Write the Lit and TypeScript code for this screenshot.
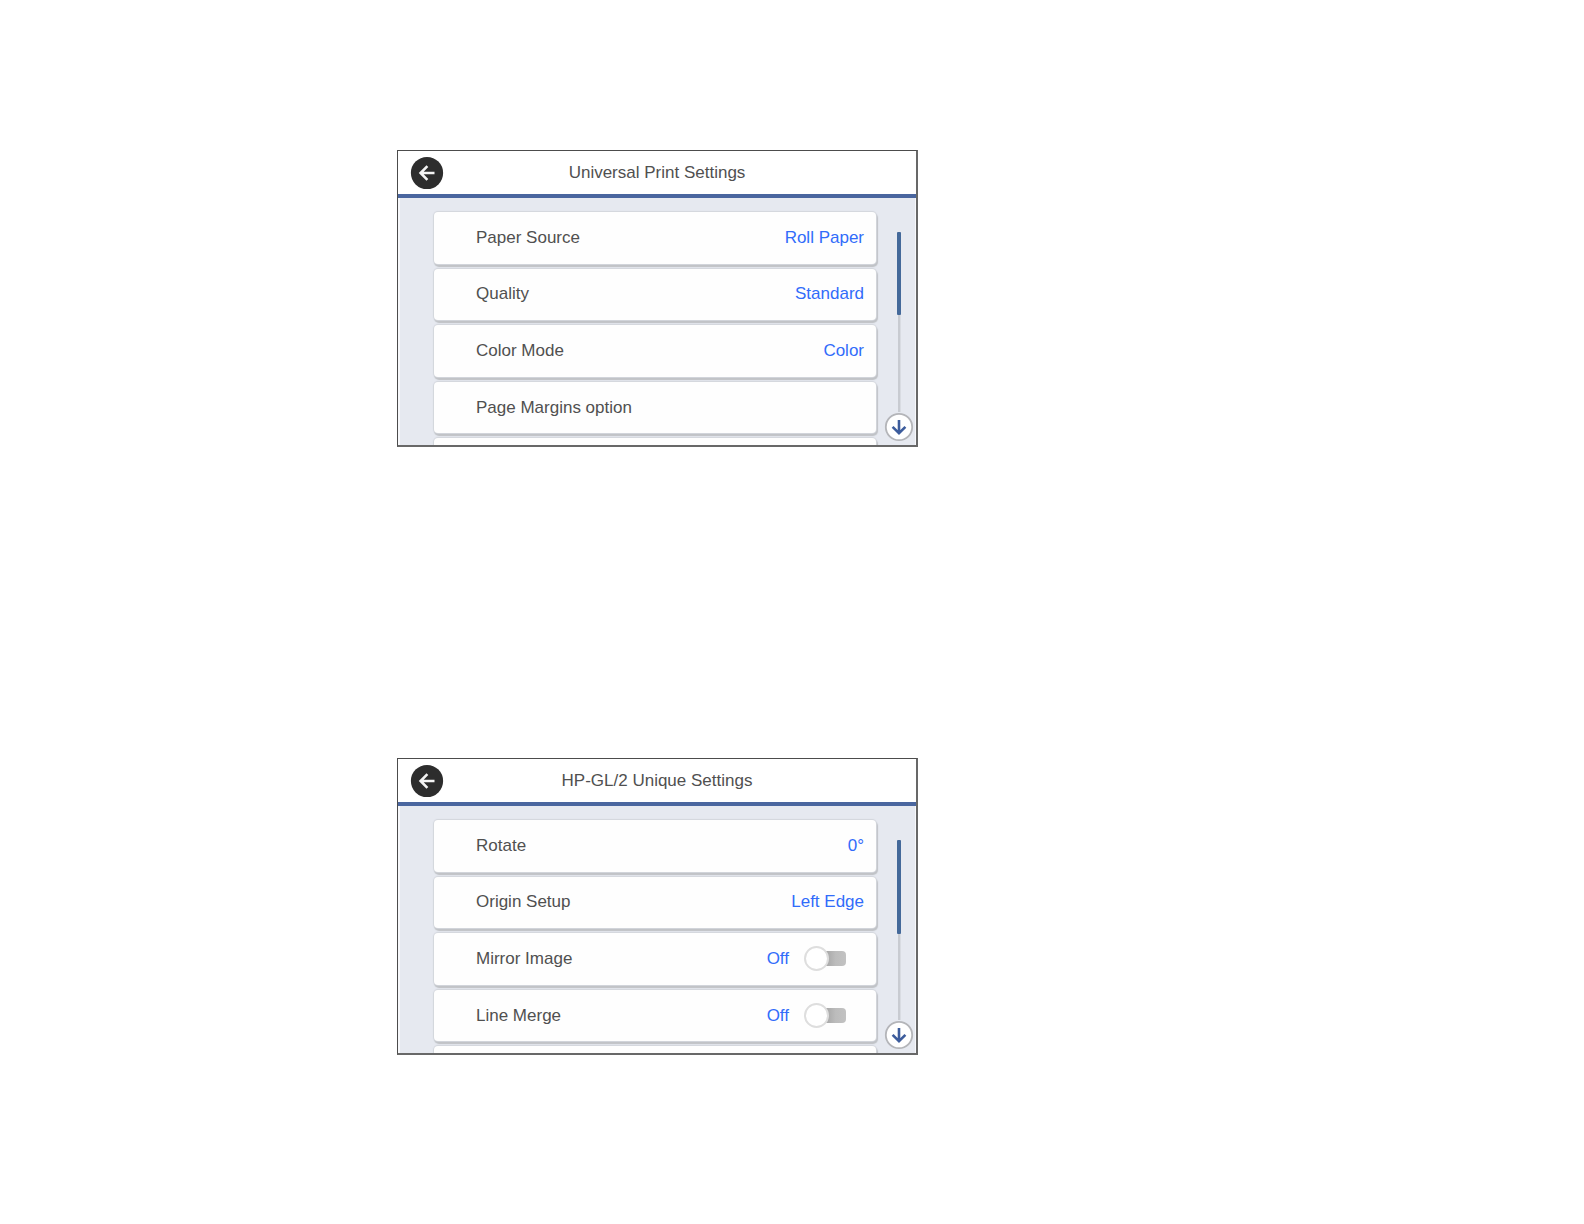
import { LitElement, html, css, nothing } from "lit";
import { customElement, property } from "lit/decorators.js";

interface Setting {
  label: string;
  value: string;
  toggle?: boolean;
}

interface Panel {
  title: string;
  thumb: number;
  settings: Setting[];
}

const PANELS: Panel[] = [
  {
    title: "Universal Print Settings",
    thumb: 46,
    settings: [
      { label: "Paper Source", value: "Roll Paper" },
      { label: "Quality", value: "Standard" },
      { label: "Color Mode", value: "Color" },
      { label: "Page Margins option", value: "" },
    ],
  },
  {
    title: "HP-GL/2 Unique Settings",
    thumb: 52,
    settings: [
      { label: "Rotate", value: "0°" },
      { label: "Origin Setup", value: "Left Edge" },
      { label: "Mirror Image", value: "Off", toggle: true },
      { label: "Line Merge", value: "Off", toggle: true },
    ],
  },
];

@customElement("settings-panel")
export class SettingsPanel extends LitElement {
  @property({ attribute: false }) panel!: Panel;

  static styles = css`
    :host {
      display: block;
      box-sizing: border-box;
      border: 1px solid #4c4c4c;
      border-right: 2px solid #686868;
      border-bottom: 2px solid #686868;
      background: #ffffff;
      color: #505050;
      font-family: "Liberation Sans", Arial, sans-serif;
      font-size: 17px;
      line-height: 20px;
    }
    .header {
      display: grid;
      grid-template-columns: 58px 1fr 58px;
      align-items: center;
      height: 43px;
      border-bottom: 4px solid #4a669f;
    }
    .title {
      margin: 0;
      font: inherit;
      text-align: center;
    }
    button {
      margin: 0;
      padding: 0;
      border: 0;
      background: none;
      color: inherit;
      font: inherit;
      text-align: left;
      cursor: pointer;
    }
    .back {
      justify-self: center;
      display: flex;
    }
    .body {
      display: grid;
      grid-template-columns: 1fr 32px;
      height: 247px;
      overflow: hidden;
      border-left: 2px solid #f7f8fb;
      border-right: 1px solid #f7f8fb;
      box-sizing: border-box;
      background: #e6e9f0;
    }
    .list {
      display: grid;
      grid-auto-rows: 1fr;
      gap: 5px;
      height: 292px;
      box-sizing: border-box;
      margin: 0;
      padding: 14px 7px 0 34px;
      list-style: none;
    }
    .item {
      display: grid;
      border-radius: 4px;
      background: #fefefe;
      box-shadow: 0 0 1px 1px #d3d6dc, 1px 2px 1px 1px #bfc1c5;
    }
    .row {
      display: flex;
      align-items: center;
      gap: 15px;
      padding: 0 12px 0 42px;
      cursor: pointer;
    }
    .label {
      flex: 1;
    }
    .value {
      color: #316cfa;
    }
    .switch {
      appearance: none;
      display: flex;
      align-items: center;
      width: 42px;
      height: 25px;
      margin: 0 18px 0 0;
      cursor: pointer;
    }
    .switch::before {
      content: "";
      box-sizing: border-box;
      z-index: 1;
      width: 25px;
      height: 25px;
      border: 2px solid #dedede;
      border-radius: 50%;
      background: #ffffff;
    }
    .switch::after {
      content: "";
      flex: 1;
      height: 15px;
      margin-left: -4px;
      border-radius: 0 4px 4px 0;
      background: linear-gradient(90deg, #a4a4a4, #bcbcbc 50%, #c2c2c2);
    }
    .scroll {
      display: flex;
      flex-direction: column;
      align-items: center;
      height: 247px;
      box-sizing: border-box;
      padding: 34px 0 3px;
    }
    .track {
      flex: 1;
      display: flex;
      justify-content: center;
      width: 4px;
      background: linear-gradient(90deg, transparent 1px, #c8cbd1 1px, #c8cbd1 3px, #d9dce2 3px);
    }
    .thumb {
      width: 4px;
      border-radius: 1px;
      background: #44699a;
    }
    .down {
      display: flex;
    }
  `;

  private renderRow(s: Setting, i: number) {
    if (s.toggle) {
      return html`<li class="item">
        <label class="row" for="switch-${i}">
          <span class="label">${s.label}</span>
          <span class="value">${s.value}</span>
          <input class="switch" id="switch-${i}" type="checkbox" role="switch" />
        </label>
      </li>`;
    }
    return html`<li class="item">
      <button class="row" type="button">
        <span class="label">${s.label}</span>
        ${s.value ? html`<span class="value">${s.value}</span>` : nothing}
      </button>
    </li>`;
  }

  render() {
    const { title, thumb, settings } = this.panel;
    return html`
      <header class="header">
        <button class="back" type="button" aria-label="Back">
          <svg width="34" height="34" viewBox="0 0 34 34" aria-hidden="true">
            <circle cx="17" cy="17" r="16.1" fill="#2d2d2d" />
            <path d="M17.4 10.2 10.6 17l6.8 6.8M11 17H24.5" fill="none" stroke="#f4f4f4" stroke-width="2.6" />
          </svg>
        </button>
        <h2 class="title">${title}</h2>
      </header>
      <div class="body">
        <ul class="list">
          ${settings.map((s, i) => this.renderRow(s, i))}
          <li class="item" aria-hidden="true"></li>
        </ul>
        <div class="scroll">
          <div class="track"><div class="thumb" style="height:${thumb}%"></div></div>
          <button class="down" type="button" aria-label="Scroll down">
            <svg width="30" height="30" viewBox="0 0 30 30" aria-hidden="true">
              <circle cx="15" cy="15" r="13.2" fill="#ffffff" stroke="#b4b5b9" stroke-width="1.8" />
              <path d="M15 8v13M8.6 14.8 15 21.2l6.4-6.4" fill="none" stroke="#3c5c9c" stroke-width="2.6" />
            </svg>
          </button>
        </div>
      </div>
    `;
  }
}

@customElement("app-root")
export class AppRoot extends LitElement {
  static styles = css`
    :host {
      display: block;
      min-height: 100vh;
      background: #ffffff;
    }
    .page {
      display: grid;
      grid-template-columns: 397fr minmax(400px, 521fr) 666fr;
      row-gap: 311px;
      padding: 150px 0;
    }
    .panel {
      grid-column: 2;
    }
  `;

  render() {
    return html`<main class="page">
      ${PANELS.map((p) => html`<settings-panel class="panel" .panel=${p}></settings-panel>`)}
    </main>`;
  }
}
